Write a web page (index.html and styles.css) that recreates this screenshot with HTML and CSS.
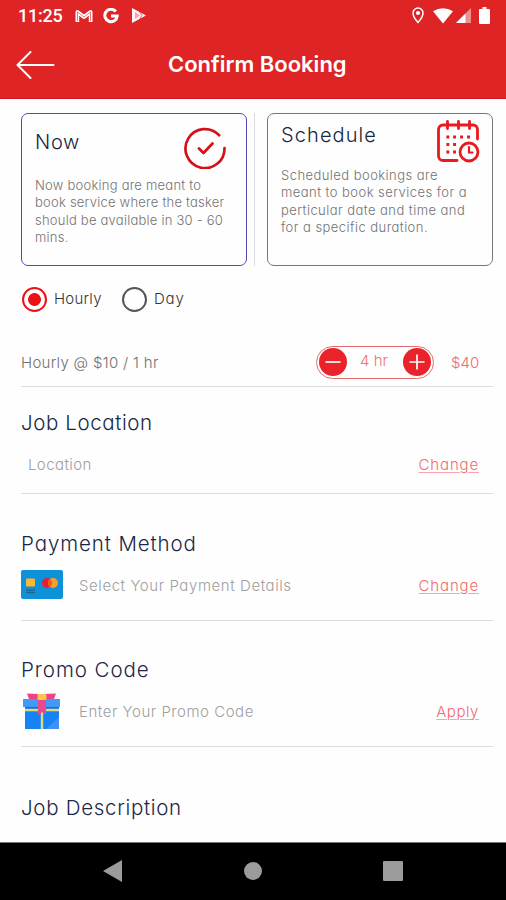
FILE: index.html
```html
<!DOCTYPE html>
<html lang="en">
<head>
<meta charset="utf-8">
<title>Confirm Booking</title>
<link rel="stylesheet" href="styles.css">
</head>
<body>
<header class="top">
  <div class="status">
    <span class="time">11:25</span>
    <svg class="gmail" width="18" height="14" viewBox="0 0 18 14" fill="none" stroke="#fff"><path d="M2.500 13V3L9 8l6.500-5v10" stroke-width="4" stroke-linejoin="round"/><path d="M2.500 12V3L9 8l6.500-5v9M4.500 7v6M13.500 7v6" stroke="#df2426" stroke-width=".6"/></svg>
    <svg class="google" width="16" height="16" viewBox="0 0 16 16" fill="none" stroke="#fff" stroke-width="3"><path d="M12.800 3.500A6.200 6.200 0 1 0 14.200 8H8"/></svg>
    <svg class="play" width="15" height="15" viewBox="0 0 15 15"><path d="M1 0 15 7.500 1 15Z" fill="#fff" fill-opacity=".95"/><path d="m4 4 5 3.500L4 11Z" fill="#f3a5a6"/><path d="m8.500 3.500 2.500 4-2.500 4" fill="none" stroke="#df2426" stroke-width=".7"/></svg>
    <div class="system">
      <svg class="pin" width="12" height="17" viewBox="0 0 12 17"><path d="M6 1a5 5 0 0 0-5 5c0 4 5 9.500 5 9.500S11 10 11 6a5 5 0 0 0-5-5Z" fill="none" stroke="#fff" stroke-width="1.500"/><circle cx="6" cy="6" r="2.100" fill="#fff"/></svg>
      <svg class="wifi" width="20" height="16" viewBox="0 0 20 16"><path d="M0 3.200Q10-2.900 20 3.200L10 15.500Z" fill="#fff"/></svg>
      <svg class="signal" width="15" height="15" viewBox="0 0 15 15"><path d="M0 15 15 0v15Z" fill="#ef8f90"/><path d="m0 15 9.500-9.500V15Z" fill="#fff"/></svg>
      <svg class="battery" width="11" height="17" viewBox="0 0 11 17"><path d="M3.500 0h4v2H10a1 1 0 0 1 1 1v13a1 1 0 0 1-1 1H1a1 1 0 0 1-1-1V3a1 1 0 0 1 1-1h2.500Z" fill="#fff"/></svg>
    </div>
  </div>
  <div class="titlebar">
    <svg class="back" width="39" height="28" viewBox="0 0 39 28" fill="none" stroke="#fff" stroke-width="2" stroke-linecap="round" stroke-linejoin="round"><path d="M37.500 14H1.500M14.500 1 1.500 14l13 13"/></svg>
    <h1>Confirm Booking</h1>
  </div>
</header>
<main>
  <div class="cards">
    <section class="card now">
      <div class="card-head">
        <h2>Now</h2>
        <svg width="42" height="42" viewBox="0 0 42 42" fill="none" stroke="#d11217" stroke-width="2.700" stroke-linecap="round" stroke-linejoin="round"><path d="M35.200 8.200A19.500 19.500 0 1 0 40.500 21M15 21.500l4.500 4.500 9-9.500"/></svg>
      </div>
      <p>Now booking are meant to<br>book service where the tasker<br>should be available in 30 - 60<br>mins.</p>
    </section>
    <div class="divider"></div>
    <section class="card later">
      <div class="card-head">
        <h2>Schedule</h2>
        <svg width="43" height="43" viewBox="0 0 43 43" fill="none" stroke="#e9191d" stroke-width="2.800" stroke-linecap="round"><path d="M20 40.500H6A4.500 4.500 0 0 1 1.500 36V9.500A4.500 4.500 0 0 1 6 5h30a4.500 4.500 0 0 1 4.500 4.500V19M10.500 1.500v7M21.500 1.500v7M32.500 1.500v7"/><circle cx="32" cy="32" r="9"/><path d="M32 27v5.500h3.500" stroke-width="2.200"/><path d="M10.800 17h.1M17.500 17h.1M24.500 17h.1M31.500 17h.1M10.800 24.500h.1M17.500 24.500h.1M10.800 32h.1M17.500 32h.1" stroke-width="2.800" stroke-linecap="square"/></svg>
      </div>
      <p>Scheduled bookings are<br>meant to book services for a<br>perticular date and time and<br>for a specific duration.</p>
    </section>
  </div>
  <div class="options">
    <span class="radio on"></span><span class="opt hourly">Hourly</span>
    <span class="radio"></span><span class="opt day">Day</span>
  </div>
  <div class="rate">
    <span class="rate-text">Hourly @ $10 / 1 hr</span>
    <div class="stepper">
      <svg width="28" height="28" viewBox="0 0 28 28"><circle cx="14" cy="14" r="14" fill="#e92329"/><path d="M6.500 14h15" stroke="#fff" stroke-width="1.700"/></svg>
      <span>4 hr</span>
      <svg width="28" height="28" viewBox="0 0 28 28"><circle cx="14" cy="14" r="14" fill="#e92329"/><path d="M6.500 14h15M14 6.500v15" stroke="#fff" stroke-width="1.700"/></svg>
    </div>
    <span class="total">$40</span>
  </div>
  <section class="block location">
    <h3 class="t-location">Job Location</h3>
    <div class="row"><span class="hint">Location</span><a class="change">Change</a></div>
  </section>
  <section class="block payment">
    <h3 class="t-payment">Payment Method</h3>
    <div class="row">
      <svg class="icon" width="42" height="29" viewBox="0 0 42 29"><rect width="42" height="29" rx="2" fill="#0d91d8"/><rect x="5" y="8.500" width="9" height="8" rx="1" fill="#fdb62f"/><path d="M5 20h9M5 22.500h9" stroke="#27648b" stroke-width="1.300"/><circle cx="26" cy="13" r="5" fill="#e71d36"/><circle cx="32" cy="13" r="5" fill="#f99d2a"/><path d="M29 9a5 5 0 0 1 0 8 5 5 0 0 1 0-8Z" fill="#ef5a1d"/></svg>
      <span class="hint h-payment">Select Your Payment Details</span><a class="change">Change</a>
    </div>
  </section>
  <section class="block promo">
    <h3 class="t-promo">Promo Code</h3>
    <div class="row">
      <svg class="icon" width="42" height="37" viewBox="0 0 42 37"><path d="M4 12h34v24H4Z" fill="#1683f5"/><path d="M38 24v12H25Z" fill="#3f91f7"/><path d="M2 6h37v8H2Z" fill="#3f9bf5"/><path d="M4 14h34v1.500H4Z" fill="#1769d8"/><path d="M4 17h34M21 15v21" stroke="#dfd686" stroke-width="2.400"/><path d="M17 1 6 .5l2 5.500h9ZM24 1l11-.5L33 6h-9Z" fill="#ee438b"/><path d="M17 6h8v15.500L21 19l-4 3.500Z" fill="#e8488e"/><rect x="16.500" y="1" width="9" height="6" rx="1.500" fill="#fbc64a"/></svg>
      <span class="hint h-promo">Enter Your Promo Code</span><a class="apply">Apply</a>
    </div>
  </section>
  <h3 class="t-description">Job Description</h3>
</main>
<nav>
  <svg width="19" height="22" viewBox="0 0 19 22"><path d="M0 11 19 0v22Z" fill="#9b9b9b"/></svg>
  <svg width="18" height="18" viewBox="0 0 18 18"><circle cx="9" cy="9" r="9" fill="#9b9b9b"/></svg>
  <svg width="20" height="20" viewBox="0 0 20 20"><rect width="20" height="20" rx="1" fill="#9b9b9b"/></svg>
</nav>
</body>
</html>
```
FILE: styles.css
```css
* { box-sizing: border-box; }
body {
  margin: 0;
  height: 900px;
  display: flex;
  flex-direction: column;
  overflow: hidden;
  background: #fefefe;
  font-family: Inter, "Open Sans", sans-serif;
  font-weight: 300;
  font-feature-settings: "cv11";
}
svg { display: block; flex: none; }
h1, h2, h3, p { margin: 0; font-weight: 300; white-space: nowrap; }
.top { height: 99px; background: #df2426; border-bottom: 1px solid #cf1519; color: #fff; }
.status { height: 31px; display: flex; align-items: center; padding: 0 16px 0 18px; }
.time { width: 57px; font: 500 18px/31px Roboto, sans-serif; letter-spacing: -.25px; }
.google { margin-left: 10px; }
.play { margin-left: 12px; }
.system { display: flex; align-items: center; margin-left: auto; }
.wifi { margin-left: 9px; }
.signal { margin-left: 3px; }
.battery { margin-left: 8px; }
.titlebar { height: 67px; display: flex; align-items: center; padding-left: 16px; }
h1 { margin-left: 113px; padding-bottom: 1px; font-size: 22px; font-weight: 600; }
main { height: 743px; padding: 14px 13px 0 21px; }
.cards { display: flex; height: 153px; }
.card { width: 226px; padding: 12px 13px; border: 1px solid #777; border-radius: 7px; }
.now { border-color: #5149b8; }
.divider { width: 1px; margin: 0 12px 0 7px; background: #dadce2; }
.card-head { display: flex; justify-content: space-between; height: 50px; }
.now .card-head { padding: 1px 7px 0 0; }
.card h2 { font-size: 20px; line-height: 30px; color: #172740; letter-spacing: 1.1px; }
.card.now h2 { letter-spacing: .7px; }
.card p { font-size: 13px; line-height: 17.400px; color: #737373; letter-spacing: .45px; }
.card.now p { padding-top: 1px; letter-spacing: .23px; }
.later { padding-top: 6px; }
.later .card-head { height: 47px; }
.later svg { margin-right: -1px; }
.options { display: flex; align-items: center; height: 66px; }
.radio { width: 25px; height: 25px; margin-left: 1px; border: 2px solid #555; border-radius: 50%; }
.radio.on { border-color: #ed1117; background: radial-gradient(circle, #ed1117 0 6px, #fff 6.800px); }
.opt { margin-left: 7px; padding-bottom: 2px; font-size: 15px; color: #333; }
.hourly { width: 67px; letter-spacing: .25px; }
.day { letter-spacing: .8px; }
.rate { display: flex; align-items: center; height: 55px; padding: 6px 14px 0 0; border-bottom: 1px solid #dcdcdc; }
.rate-text { font-size: 15px; color: #707070; letter-spacing: .3px; }
.stepper { width: 118px; height: 33px; margin-left: auto; padding: 0 2px; display: flex; align-items: center; justify-content: space-between; border: 1px solid #e66c70; border-radius: 17px; color: #ef7275; font-size: 15px; }
.stepper span { padding: 0 2px 3px 0; }
.total { width: 28px; margin-left: 17px; font-size: 15px; color: #ef686c; }
h3 { font-size: 20.500px; line-height: 30px; color: #1a2747; }
.t-location { letter-spacing: .6px; }
.t-payment { letter-spacing: .9px; }
.t-promo { letter-spacing: .95px; }
.block { border-bottom: 1px solid #dcdcdc; }
.location { height: 107px; padding-top: 21px; }
.payment { height: 127px; padding-top: 35px; }
.promo { height: 126px; padding-top: 34px; }
.row { display: flex; align-items: center; height: 42px; padding: 0 14px 0 0; margin-top: 5px; font-size: 15px; }
.payment .icon { margin-bottom: 2px; }
.hint { color: #a0a0a0; letter-spacing: .4px; }
.h-payment { letter-spacing: .57px; }
.h-promo { letter-spacing: .53px; }
.location .hint { padding-left: 7px; }
.icon { margin-right: 16px; }
.row a { margin-left: auto; color: #f06a6e; text-decoration: underline; text-decoration-color: #f7a5a8; text-decoration-thickness: 1px; text-underline-offset: 2px; letter-spacing: .85px; }
.row .apply { letter-spacing: .55px; }
.t-description { padding-top: 46px; letter-spacing: .7px; }
nav { height: 58px; background: #000; border-top: 1px solid #777; display: flex; align-items: center; justify-content: space-between; padding: 0 103px 2px; }
```
